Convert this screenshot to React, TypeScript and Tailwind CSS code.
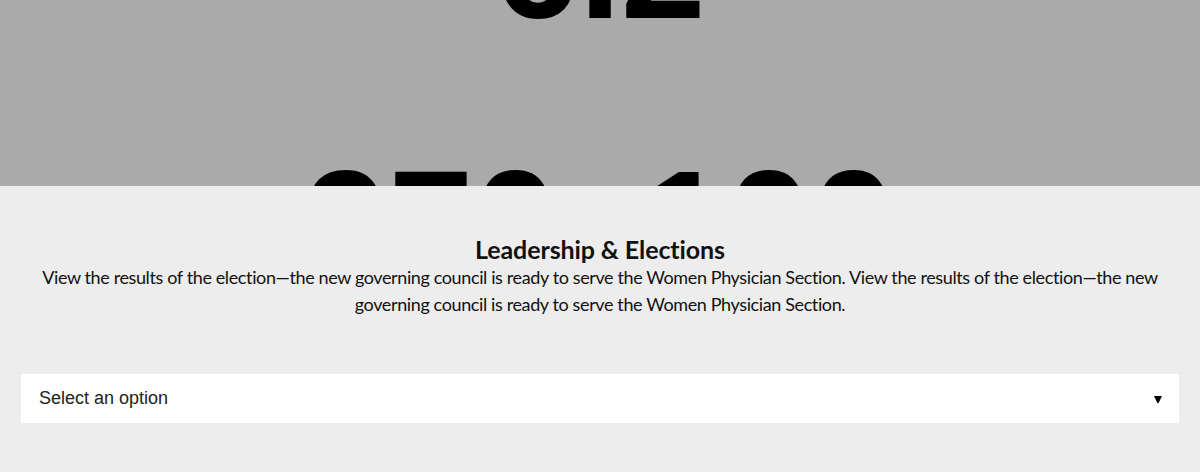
import React from 'react';

export default function App() {
  return (
    <div className="w-[1200px] h-[472px] overflow-hidden bg-[#ededed]">
      {/* Banner image placeholder */}
      <div className="h-[186px] overflow-hidden bg-[#aaaaaa]">
        <div className="flex flex-col items-center mt-[-111px] gap-[107px] font-['Liberation_Sans',Arial,sans-serif] font-bold text-[152px] leading-[152px] text-black">
          <span>6.2</span>
          <span>970x100</span>
        </div>
      </div>

      {/* Leadership section */}
      <section className="px-[21px] pt-[48px]">
        <div className="text-center font-['Lato',sans-serif] text-[#111]">
          <h2 className="text-[25px] leading-[30px] font-bold tracking-[-0.1px]">Leadership &amp; Elections</h2>
          <p className="text-[18px] leading-[27px] tracking-[-0.38px]">
            View the results of the election—the new governing council is ready to serve the Women Physician Section. View the results of the election—the new governing council is ready to serve the Women Physician Section.
          </p>
        </div>

        <div className="mt-[56px] h-[49px] bg-white flex items-center justify-between pl-[18px] pr-[17px] font-['Liberation_Sans',Arial,sans-serif]">
          <span className="text-[18px] text-[#222]">Select an option</span>
          <svg width="8" height="7" viewBox="0 0 8 7" className="mt-[1px]">
            <path d="M0 0H8L4.6 7H3.4Z" fill="#000" />
          </svg>
        </div>
      </section>
    </div>
  );
}
